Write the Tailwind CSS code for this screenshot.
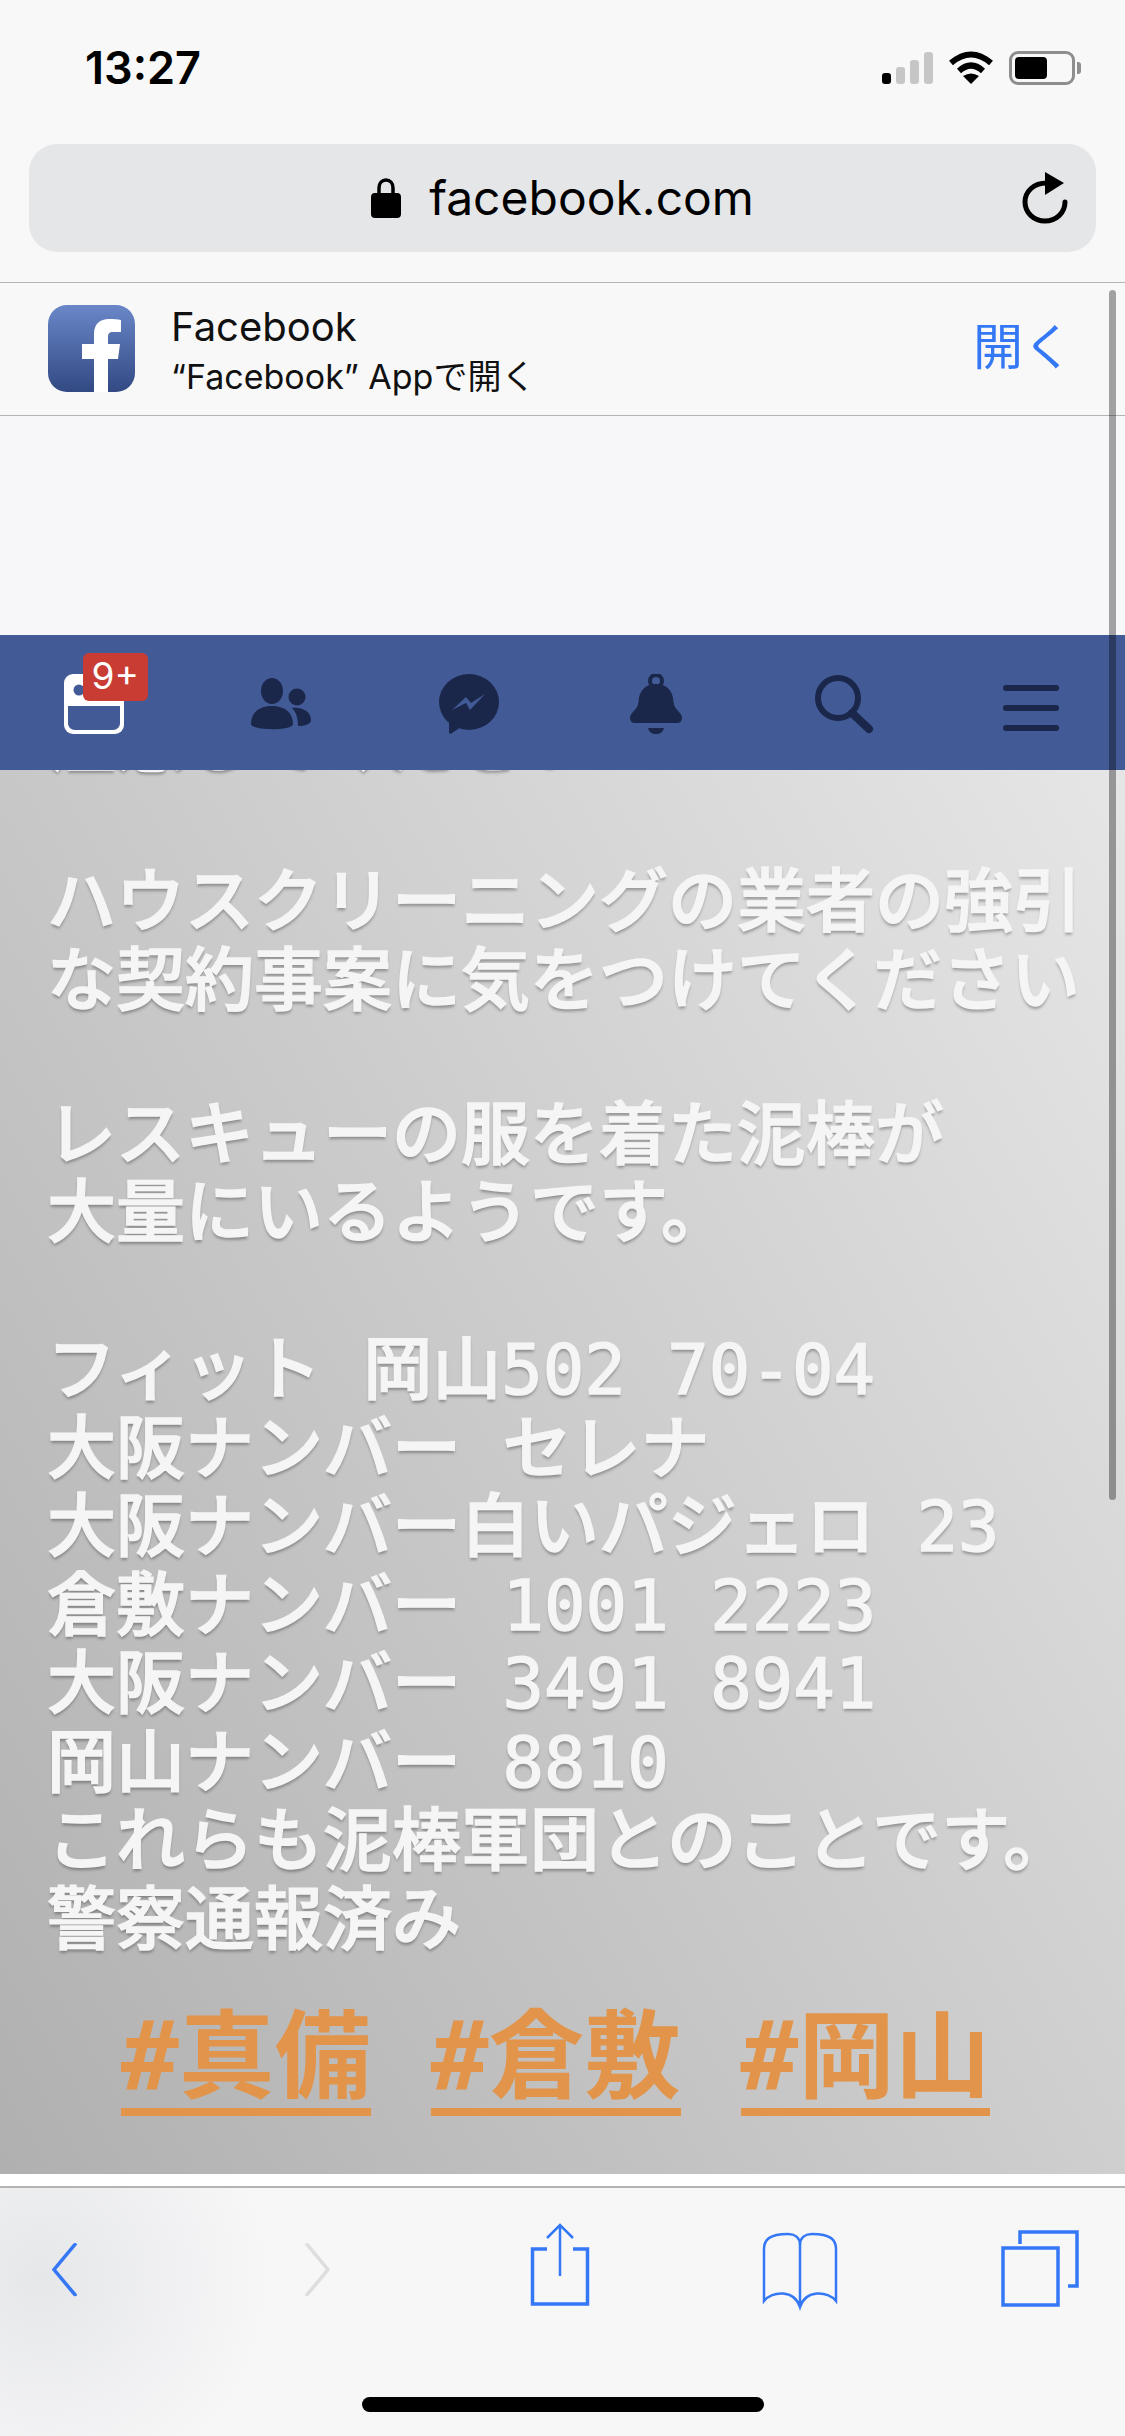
<!DOCTYPE html>
<html lang="ja">
<head>
  <meta charset="UTF-8" />
  <title>facebook.com</title>
  <script src="https://cdn.jsdelivr.net/npm/@tailwindcss/browser@4"></script>
</head>
<body class="bg-white font-['Inter','Noto_Sans_CJK_JP',sans-serif]">
<div class="relative w-[1125px] h-[2436px] overflow-hidden flex flex-col">

  <!-- Safari top -->
  <div class="bg-[#f8f8f8] h-[282px] shrink-0 border-b border-[#b4b4b4] box-content">
    <div class="h-[136px] pl-[85px] pr-[44px] flex justify-between items-center">
      <span class="text-[45px] font-semibold text-black">13:27</span>
      <div class="flex items-center">
        <div class="flex items-end gap-[5px] h-[32px]">
          <div class="w-[9px] h-[11px] rounded-[3px] bg-black"></div>
          <div class="w-[9px] h-[17px] rounded-[3px] bg-[#c6c6c6]"></div>
          <div class="w-[9px] h-[24px] rounded-[3px] bg-[#c6c6c6]"></div>
          <div class="w-[9px] h-[32px] rounded-[3px] bg-[#c6c6c6]"></div>
        </div>
        <svg class="ml-[15px]" width="46" height="34" viewBox="0 0 46 34">
          <path d="M3 12 Q23 -5 43 12" fill="none" stroke="#000" stroke-width="6" />
          <path d="M11 20 Q23 9 35 20" fill="none" stroke="#000" stroke-width="6" />
          <path d="M23 33 L15 25 Q23 20 31 25 Z" fill="#000" />
        </svg>
        <div class="ml-[15px] w-[66px] h-[34px] rounded-[9px] border-[3px] border-[#8e8e8e] p-[3px]">
          <div class="w-[32px] h-full rounded-[4px] bg-black"></div>
        </div>
        <div class="ml-[2px] w-[4px] h-[12px] rounded-r-[3px] bg-[#8e8e8e]"></div>
      </div>
    </div>
    <div class="relative mt-[8px] mx-[29px] h-[108px] rounded-[28px] bg-[#e5e6e8] flex items-center justify-center gap-[28px]">
      <svg width="30" height="40" viewBox="0 0 30 40">
        <path d="M8 18 V10 C8 5 11 2 15 2 C19 2 22 5 22 10 V18" fill="none" stroke="#000" stroke-width="3.5" />
        <rect x="0" y="15" width="30" height="25" rx="4" fill="#000" />
      </svg>
      <span class="text-[48px] text-black leading-none">facebook.com</span>
      <svg class="absolute right-[28px] top-[28px]" width="46" height="52" viewBox="0 0 46 52">
        <path d="M25 11 C11 11 3 20 3 30 C3 41 12 49 23 49 C34 49 43 41 43 30" fill="none" stroke="#000" stroke-width="5" stroke-linecap="round" />
        <path d="M23 0 L42 11 L23 23 Z" fill="#000" />
      </svg>
    </div>
  </div>

  <!-- Open in app banner -->
  <div class="bg-[#f8f8f8] h-[132px] shrink-0 border-b border-[#b4b4b4] box-content flex items-center pl-[48px] pr-[52px]">
    <svg class="-mt-[2px]" width="87" height="87" viewBox="0 0 87 87">
      <defs>
        <linearGradient id="fb" x1="0" y1="0" x2="0" y2="1">
          <stop offset="0" stop-color="#6a87c8" />
          <stop offset="1" stop-color="#324983" />
        </linearGradient>
      </defs>
      <rect width="87" height="87" rx="19" fill="url(#fb)" />
      <path d="M46 87 V54 H34 V39 H46 V29 C46 19 52 14 61 14 C66 14 70 14 73 15 V27 H65 C61 27 60 29 60 32 V39 H72 L70 54 H60 V87 Z" fill="#fff" />
    </svg>
    <div class="ml-[36px] mt-[5px] flex flex-col">
      <span class="text-[40px] leading-[50px] text-[#111]">Facebook</span>
      <span class="text-[34px] leading-[50px] text-[#111]">“Facebook” Appで開く</span>
    </div>
    <span class="ml-auto -mt-[4px] text-[50px] text-[#3478f6]">開く</span>
  </div>

  <!-- blank area of page -->
  <div class="bg-[#f7f7fa] h-[219px] shrink-0"></div>

  <!-- Facebook nav -->
  <div class="relative z-10 bg-[#425a95] h-[135px] shrink-0 grid grid-cols-6 items-start pt-[39px] justify-items-center">
    <div class="relative w-[60px] h-[60px]">
      <svg width="60" height="60" viewBox="0 0 60 60">
        <rect width="60" height="60" rx="9" fill="#fff" />
        <path d="M4 32 H56 V49 C56 53 53 56 49 56 H11 C7 56 4 53 4 49 Z" fill="#425a95" />
        <circle cx="15" cy="16" r="5.5" fill="#425a95" />
      </svg>
      <div class="absolute left-[19px] top-[-21px] w-[65px] h-[48px] rounded-[6px] bg-[#c93c33] text-white text-[37px] leading-[46px] text-center">9+</div>
    </div>
    <svg width="60" height="60" viewBox="0 0 60 60">
      <ellipse cx="21" cy="17" rx="11" ry="13" fill="#1a274a" />
      <path d="M0 50 C0 38 9 32 21 32 C33 32 42 38 42 50 C42 57 0 57 0 50 Z" fill="#1a274a" />
      <circle cx="46" cy="23" r="8.5" fill="#1a274a" />
      <path d="M41 34 C52 33 60 38 60 46 C60 50 54 52 47 52 C47 44 45 38 41 34 Z" fill="#1a274a" />
    </svg>
    <svg width="60" height="60" viewBox="0 0 60 60">
      <ellipse cx="30" cy="28" rx="30" ry="28" fill="#1a274a" />
      <path d="M10 46 V58 C10 60 12 60 13 59 L22 53 Z" fill="#1a274a" />
      <path d="M13 36 L27 23 L32 29 L46 20 L31 36 L27 29 Z" fill="#425a95" />
    </svg>
    <svg width="60" height="60" viewBox="0 0 60 60">
      <circle cx="30" cy="7" r="6" fill="none" stroke="#1a274a" stroke-width="4" />
      <path d="M30 10 C19 10 13 17 12.5 28 C12 36 4 38 4 44 C4 47 6 49 9 49 H51 C54 49 56 47 56 44 C56 38 48 36 47.5 28 C47 17 41 10 30 10 Z" fill="#1a274a" />
      <path d="M22 54 H38 C37 58 34 60 30 60 C26 60 23 58 22 54 Z" fill="#1a274a" />
    </svg>
    <svg width="60" height="60" viewBox="0 0 60 60">
      <circle cx="24" cy="24" r="20" fill="none" stroke="#1a274a" stroke-width="6" />
      <path d="M38 39 L55 55" fill="none" stroke="#1a274a" stroke-width="8" stroke-linecap="round" />
    </svg>
    <div class="w-[56px] h-[60px] flex flex-col gap-[14px] pt-[11px]">
      <div class="h-[6px] rounded-full bg-[#1a274a]"></div>
      <div class="h-[6px] rounded-full bg-[#1a274a]"></div>
      <div class="h-[6px] rounded-full bg-[#1a274a]"></div>
    </div>
  </div>

  <!-- Post image -->
  <div class="h-[1404px] shrink-0 overflow-hidden bg-[linear-gradient(59deg,#b0b0b0,#e6e6e6)]">
    <div class="-mt-[67px] pl-[47px] text-[69px] leading-[78.5px] text-[#f5f5f5] font-medium font-['DejaVu_Sans_Mono','Noto_Sans_CJK_JP',monospace] [-webkit-text-stroke:1.5px_#f5f5f5] [text-shadow:0_3px_3px_rgba(0,0,0,0.3)]">
      <div class="whitespace-pre">注意してください</div>
      <div class="h-[81.5px]"></div>
      <div class="whitespace-pre">ハウスクリーニングの業者の強引</div>
      <div class="whitespace-pre">な契約事案に気をつけてください</div>
      <div class="h-[75.5px]"></div>
      <div class="whitespace-pre">レスキューの服を着た泥棒が</div>
      <div class="whitespace-pre">大量にいるようです。</div>
      <div class="h-[78.5px]"></div>
      <div class="whitespace-pre">フィット 岡山502 70-04</div>
      <div class="whitespace-pre">大阪ナンバー セレナ</div>
      <div class="whitespace-pre">大阪ナンバー白いパジェロ 23</div>
      <div class="whitespace-pre">倉敷ナンバー 1001 2223</div>
      <div class="whitespace-pre">大阪ナンバー 3491 8941</div>
      <div class="whitespace-pre">岡山ナンバー 8810</div>
      <div class="whitespace-pre">これらも泥棒軍団とのことです。</div>
      <div class="whitespace-pre">警察通報済み</div>
    </div>
    <div class="mt-[47px] pl-[121px] flex gap-[60px] text-[96px] leading-[102px] font-bold text-[#e2944a] font-['DejaVu_Sans_Mono','Noto_Sans_CJK_JP',monospace]">
      <span class="border-b-[8px] border-[#e2944a]">#真備</span>
      <span class="border-b-[8px] border-[#e2944a]">#倉敷</span>
      <span class="border-b-[8px] border-[#e2944a]">#岡山</span>
    </div>
  </div>

  <!-- Safari toolbar -->
  <div class="h-[12px] bg-white shrink-0"></div>
  <div class="flex-1 border-t-2 border-[#b4b4b4] relative bg-[radial-gradient(circle_at_40px_90px,#e6e7e9,#f7f7f8_230px)]">
    <div class="grid grid-cols-[251px_244px_240px_240px_80px] pl-[25px] pt-[35px]">
      <svg width="80" height="90" viewBox="0 0 80 90">
        <path d="M50 22 L29 58 L50 94" transform="translate(0 -1) scale(1 0.7) translate(0 10)" fill="none" stroke="#3478f6" stroke-width="4" stroke-linecap="round" stroke-linejoin="round" />
      </svg>
      <svg width="80" height="90" viewBox="0 0 80 90">
        <path d="M31 22 L52 58 L31 94" transform="translate(-14 -1) scale(1 0.7) translate(14 10)" fill="none" stroke="#dedede" stroke-width="4" stroke-linecap="round" stroke-linejoin="round" />
      </svg>
      <svg width="80" height="90" viewBox="0 0 80 90">
        <path d="M27 26 H12.5 V81 H67.5 V26 H53" fill="none" stroke="#3478f6" stroke-width="3.5" />
        <path d="M40 53 V3 M27 15 L40 2 L53 15" fill="none" stroke="#3478f6" stroke-width="2.5" />
      </svg>
      <svg width="80" height="90" viewBox="0 0 80 90">
        <path d="M40 84 V22 C40 14 34 11 28 11 C9 11 4 17 4 26 V78 C12 68 34 66 40 84 C46 66 68 68 76 78 V26 C76 17 71 11 52 11 C46 11 40 14 40 22" fill="none" stroke="#3478f6" stroke-width="2.5" />
      </svg>
      <svg width="80" height="90" viewBox="0 0 80 90">
        <path d="M20 21 V9 H77 V63 H68" fill="none" stroke="#3478f6" stroke-width="3.5" />
        <rect x="3" y="25" width="55" height="57" fill="none" stroke="#3478f6" stroke-width="3.5" />
      </svg>
    </div>
    <div class="absolute left-[362px] top-[209px] w-[402px] h-[15px] rounded-full bg-black"></div>
  </div>

  <!-- scroll indicator over the page -->
  <div class="absolute z-20 left-[1109px] top-[290px] w-[7px] h-[1210px] rounded-full bg-black/35"></div>
</div>
</body>
</html>
